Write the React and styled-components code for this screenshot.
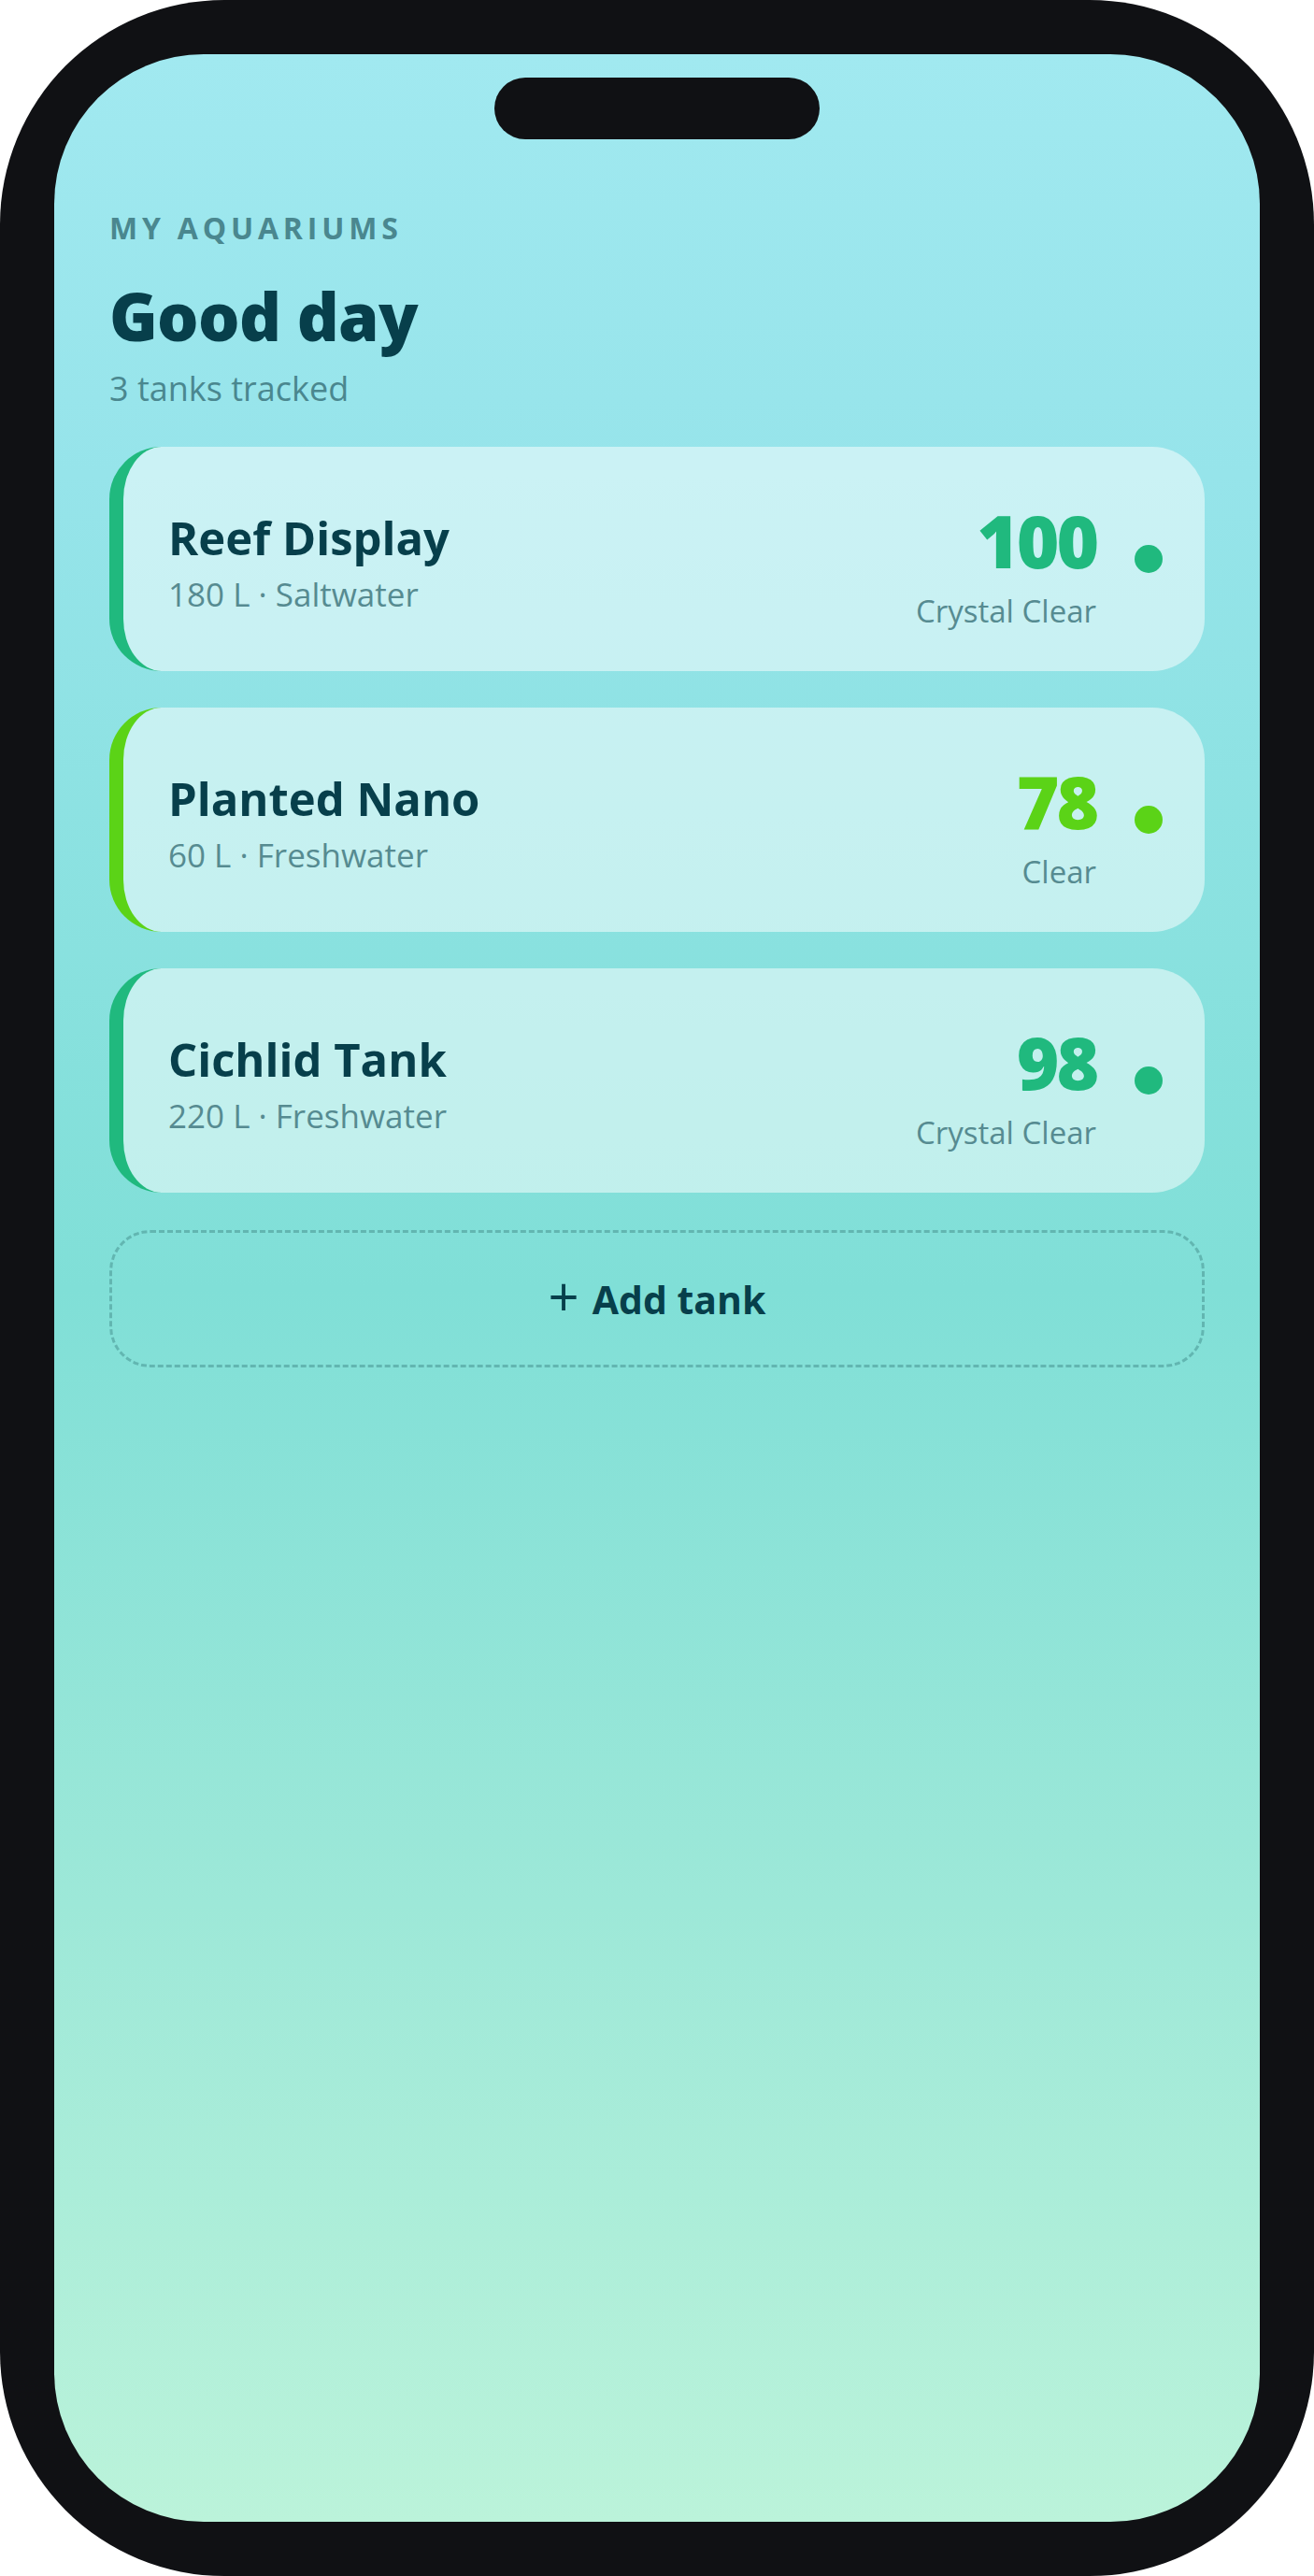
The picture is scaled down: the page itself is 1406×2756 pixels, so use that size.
import React from 'react';
import styled, { createGlobalStyle } from 'styled-components';

const GlobalStyle = createGlobalStyle`
    html, body {
        margin: 0;
        padding: 0;
        background: #ffffff;
    }
    * {
        box-sizing: border-box;
    }
`

const Phone = styled.div`
    width: 1406px;
    height: 2756px;
    padding: 58px;
    background: #101114;
    border-radius: 240px;
    font-family: "Open Sans", "Noto Sans", sans-serif;
`

const Screen = styled.div`
    position: relative;
    height: 100%;
    border-radius: 160px;
    overflow: hidden;
    padding: 166px 59px 0;
    background: linear-gradient(180deg, #a1e9f0 0%, #96e4ea 17%, #80dfd7 50%, #9de8d8 75%, #bbf3da 100%);
`

const Notch = styled.div`
    position: absolute;
    top: 25px;
    left: 50%;
    transform: translateX(-50%);
    width: 348px;
    height: 66px;
    border-radius: 33px;
    background: #101114;
`

const Label = styled.div`
    font-size: 32px;
    line-height: 40px;
    font-weight: 700;
    letter-spacing: 0.15em;
    color: #4a878f;
    text-transform: uppercase;
`

const Title = styled.h1`
    margin: 29px 0 0;
    font-size: 70px;
    line-height: 90px;
    font-weight: 800;
    letter-spacing: -0.01em;
    color: #073f4b;
`

const Sub = styled.div`
    margin-top: 10px;
    font-size: 36px;
    line-height: 46px;
    color: #4a878f;
`

const List = styled.div`
    display: flex;
    flex-direction: column;
    gap: 39px;
    margin-top: 39px;
`

const Card = styled.div`
    height: 240px;
    display: flex;
    align-items: center;
    padding: 0 45px 0 48px;
    border-left: 15px solid ${props => props.color};
    border-radius: 56px;
    background: rgba(255, 255, 255, 0.5);
`

const Info = styled.div`
    flex: 1;
    display: flex;
    flex-direction: column;
    padding-top: 6px;
`

const Name = styled.div`
    font-size: 49px;
    line-height: 62px;
    font-weight: 700;
    color: #073f4b;
`

const Meta = styled.div`
    margin-top: 7px;
    font-size: 35px;
    line-height: 46px;
    color: #568b91;
`

const Score = styled.div`
    display: flex;
    flex-direction: column;
    align-items: flex-end;
    margin-top: 14px;
`

const Value = styled.div`
    font-size: 78px;
    line-height: 84px;
    font-weight: 800;
    letter-spacing: -0.04em;
    color: ${props => props.color};
`

const Status = styled.div`
    margin-top: 13px;
    font-size: 33px;
    line-height: 42px;
    color: #568b91;
`

const Dot = styled.span`
    flex: none;
    width: 30px;
    height: 30px;
    margin-left: 41px;
    border-radius: 50%;
    background: ${props => props.color};
`

const AddButton = styled.button`
    margin-top: 40px;
    width: 100%;
    height: 147px;
    display: flex;
    align-items: center;
    justify-content: center;
    gap: 14px;
    border: 3px dashed #62b6b1;
    border-radius: 44px;
    background: transparent;
    font-family: inherit;
    font-size: 41px;
    font-weight: 700;
    color: #073f4b;
    cursor: pointer;
`

const Plus = styled.span`
    font-weight: 400;
    font-size: 58px;
    line-height: 1;
    margin-top: -6px;
`

const tanks = [
    { name: 'Reef Display', meta: '180 L · Saltwater', score: 100, status: 'Crystal Clear', color: '#20b97e' },
    { name: 'Planted Nano', meta: '60 L · Freshwater', score: 78, status: 'Clear', color: '#5bd317' },
    { name: 'Cichlid Tank', meta: '220 L · Freshwater', score: 98, status: 'Crystal Clear', color: '#20b97e' },
]

const App = () => {
    return (
        <>
            <GlobalStyle />
            <Phone>
                <Screen>
                    <Notch />
                    <Label>My Aquariums</Label>
                    <Title>Good day</Title>
                    <Sub>3 tanks tracked</Sub>
                    <List>
                        {tanks.map(tank => (
                            <Card key={tank.name} color={tank.color}>
                                <Info>
                                    <Name>{tank.name}</Name>
                                    <Meta>{tank.meta}</Meta>
                                </Info>
                                <Score>
                                    <Value color={tank.color}>{tank.score}</Value>
                                    <Status>{tank.status}</Status>
                                </Score>
                                <Dot color={tank.color} />
                            </Card>
                        ))}
                    </List>
                    <AddButton>
                        <Plus>+</Plus>
                        Add tank
                    </AddButton>
                </Screen>
            </Phone>
        </>
    )
}

export default App;
